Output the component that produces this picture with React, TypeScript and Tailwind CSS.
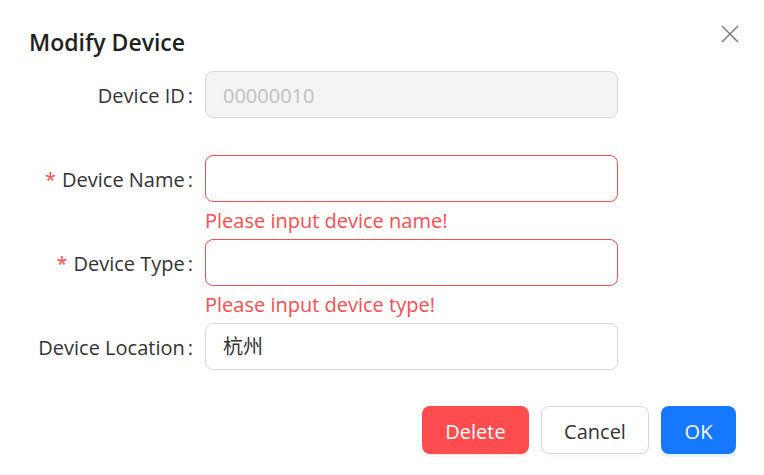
import React from 'react';

const font = { fontFamily: '"Open Sans", "Noto Sans CJK SC", sans-serif' };

interface FieldProps {
  label: string;
  required?: boolean;
  children: React.ReactNode;
}

const Field: React.FC<FieldProps> = ({ label, required, children }) => (
  <div className="flex items-center h-[47px]">
    <div className="w-[164px] pt-[2px] flex justify-end items-center text-[20px] text-[#333333] whitespace-nowrap">
      {required && <span className="text-[#ff4d4f] mr-[6px]">*</span>}
      <span>{label}</span>
      <span className="ml-[3px]">:</span>
    </div>
    <div className="ml-[12px] w-[413px] h-[47px]">{children}</div>
  </div>
);

const ErrorText: React.FC<{ text: string }> = ({ text }) => (
  <div className="pl-[176px] h-[37px] leading-[37px] text-[20px] text-[#ff4d4f]">{text}</div>
);

export default function App() {
  return (
    <div style={font} className="relative w-[764px] h-[475px] bg-white">
      {/* close */}
      <button className="absolute top-[25px] right-[25px] w-[18px] h-[18px] text-[#7f7f7f]">
        <svg viewBox="0 0 18 18" className="w-[18px] h-[18px]" fill="none" stroke="currentColor" strokeWidth="1.6">
          <path d="M1 1 L17 17 M17 1 L1 17" />
        </svg>
      </button>

      <div className="pt-[26px] px-[29px]">
        <h2 className="h-[33px] leading-[33px] text-[23px] font-semibold text-[#1f1f1f]">Modify Device</h2>

        <div className="mt-[12px] flex flex-col">
          <Field label="Device ID">
            <div className="w-full h-full rounded-[8px] border border-[#d9d9d9] bg-[#f4f4f4] px-[17px] pt-[2px] flex items-center text-[20px] text-[#bfbfbf]">
              00000010
            </div>
          </Field>
          <div className="h-[37px]" />

          <Field label="Device Name" required>
            <div className="w-full h-full rounded-[8px] border border-[#ff4d4f] bg-white" />
          </Field>
          <ErrorText text="Please input device name!" />

          <Field label="Device Type" required>
            <div className="w-full h-full rounded-[8px] border border-[#ff4d4f] bg-white" />
          </Field>
          <ErrorText text="Please input device type!" />

          <Field label="Device Location">
            <div className="w-full h-full rounded-[8px] border border-[#d9d9d9] bg-white px-[17px] flex items-center text-[20px] text-[#333333]">
              杭州
            </div>
          </Field>
        </div>
      </div>

      <div className="mt-[36px] pr-[28px] flex justify-end gap-[12px]">
        <button className="h-[48px] w-[107px] pt-[3px] rounded-[8px] bg-[#ff4d4f] text-white text-[20px] shadow-[0_3px_0_rgba(255,38,5,0.06)]">
          Delete
        </button>
        <button className="h-[48px] w-[108px] pt-[3px] rounded-[8px] border border-[#d9d9d9] bg-white text-[#333333] text-[20px] shadow-[0_3px_0_rgba(0,0,0,0.02)]">
          Cancel
        </button>
        <button className="h-[48px] w-[75px] pt-[3px] rounded-[8px] bg-[#1677ff] text-white text-[20px] shadow-[0_3px_0_rgba(5,145,255,0.1)]">
          OK
        </button>
      </div>
    </div>
  );
}
